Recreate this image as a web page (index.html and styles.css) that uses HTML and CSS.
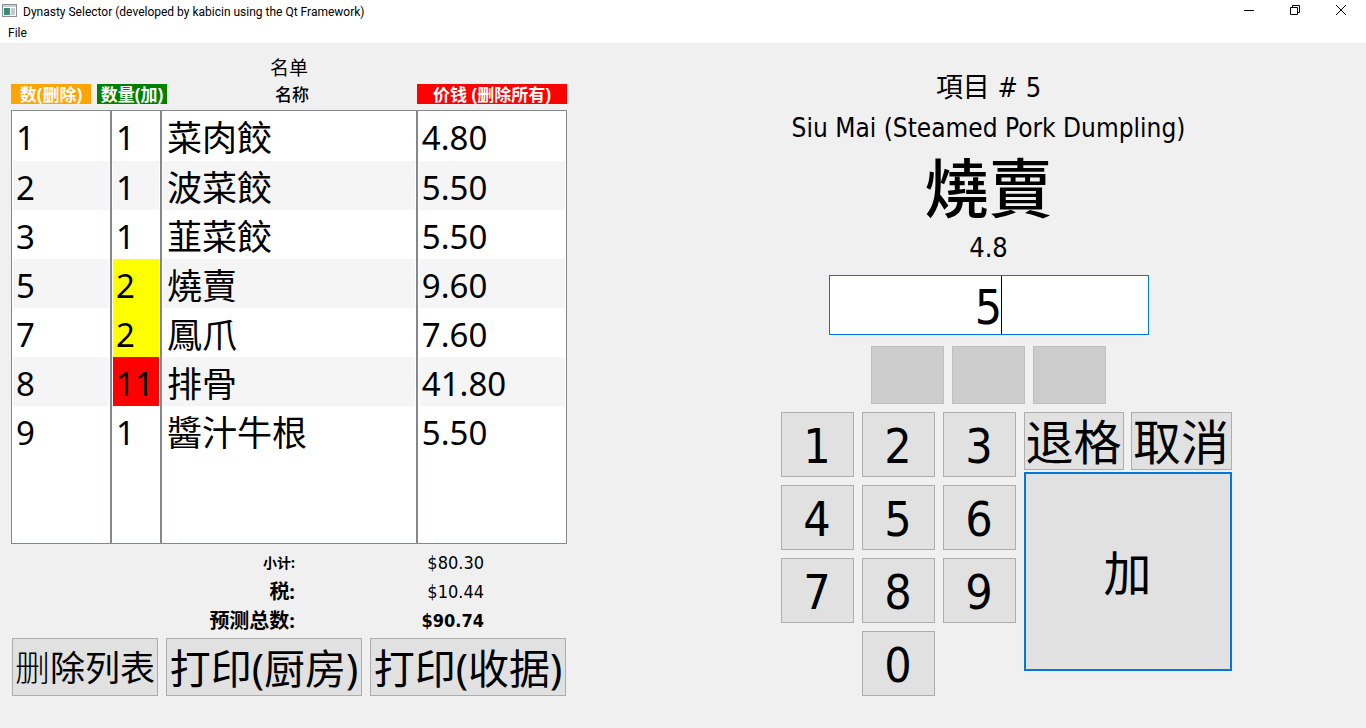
FILE: index.html
```html
<!DOCTYPE html>
<html lang="zh">
<head>
<meta charset="utf-8">
<title>Dynasty Selector</title>
<link rel="stylesheet" href="styles.css">
</head>
<body>
<header class="titlebar">
  <svg class="app-icon" width="16" height="16" viewBox="0 0 16 16" aria-hidden="true">
    <defs><linearGradient id="pane" x1="0" y1="0" x2="1" y2="1"><stop offset="0" stop-color="#2f7f8c"/><stop offset="1" stop-color="#3f9a5e"/></linearGradient></defs>
    <rect x="0.5" y="0.5" width="14" height="12" fill="#fff" stroke="#8b8f94"/>
    <rect x="1" y="1" width="13" height="2" fill="#c9ced4"/>
    <rect x="2" y="4" width="6" height="7" fill="url(#pane)"/>
    <rect x="9" y="4" width="4" height="7" fill="#c3ccd6"/>
  </svg>
  <h1 class="title">Dynasty Selector (developed by kabicin using the Qt Framework)</h1>
  <div class="window-buttons">
    <button class="window-button" aria-label="Minimize"><svg width="10" height="10" viewBox="0 0 10 10"><path d="M0 5.500H10" stroke="#000"/></svg></button>
    <button class="window-button" aria-label="Restore"><svg width="10" height="10" viewBox="0 0 10 10"><path d="M0.500 2.500H7.500V9.500H0.500ZM2.500 2V0.500H9.500V7.500H8" fill="none" stroke="#000"/></svg></button>
    <button class="window-button" aria-label="Close"><svg width="10" height="10" viewBox="0 0 10 10"><path d="M0 0L10 10M10 0L0 10" stroke="#000"/></svg></button>
  </div>
</header>
<nav class="menubar"><button class="menu">File</button></nav>

<main class="workspace">
  <section class="order">
    <h2 class="order-title">名单</h2>
    <div class="order-head">
      <button class="tag tag-orange">数(删除)</button>
      <button class="tag tag-green">数量(加)</button>
      <span class="head-name">名称</span>
      <button class="tag tag-red">价钱 (删除所有)</button>
    </div>
    <table class="items" aria-label="名单">
      <colgroup><col class="col-no"><col class="col-qty"><col class="col-name"><col class="col-price"></colgroup>
      <tbody>
        <tr><td>1</td><td>1</td><td class="name">菜肉餃</td><td>4.80</td></tr>
        <tr><td>2</td><td>1</td><td class="name">波菜餃</td><td>5.50</td></tr>
        <tr><td>3</td><td>1</td><td class="name">韮菜餃</td><td>5.50</td></tr>
        <tr><td>5</td><td class="qty-warn">2</td><td class="name">燒賣</td><td>9.60</td></tr>
        <tr><td>7</td><td class="qty-warn">2</td><td class="name">鳳爪</td><td>7.60</td></tr>
        <tr><td>8</td><td class="qty-high">11</td><td class="name">排骨</td><td>41.80</td></tr>
        <tr><td>9</td><td>1</td><td class="name">醬汁牛根</td><td>5.50</td></tr>
        <tr class="filler"><td></td><td></td><td></td><td></td></tr>
      </tbody>
    </table>
    <dl class="totals">
      <dt class="subtotal">小计:</dt><dd>$80.30</dd>
      <dt>税:</dt><dd>$10.44</dd>
      <dt>预测总数:</dt><dd class="grand">$90.74</dd>
    </dl>
    <div class="actions">
      <button class="button action-clear"><span class="thin">删</span>除列表</button>
      <button class="button action">打印(厨房)</button>
      <button class="button action">打印(收据)</button>
    </div>
  </section>

  <section class="entry">
    <label class="item-no" for="code">項目 # 5</label>
    <p class="item-english">Siu Mai (Steamed Pork Dumpling)</p>
    <p class="item-chinese">燒賣</p>
    <p class="item-price">4.8</p>
    <div class="code-box"><input class="code" id="code" type="text" value="5"><span class="caret"></span></div>
    <div class="options">
      <button class="button option" disabled></button>
      <button class="button option" disabled></button>
      <button class="button option" disabled></button>
    </div>
    <div class="keypad">
      <div class="digits">
        <button class="button">1</button><button class="button">2</button><button class="button">3</button>
        <button class="button">4</button><button class="button">5</button><button class="button">6</button>
        <button class="button">7</button><button class="button">8</button><button class="button">9</button>
        <button class="button zero">0</button>
      </div>
      <div class="commands">
        <button class="button">退格</button><button class="button">取消</button>
        <button class="button add">加</button>
      </div>
    </div>
  </section>
</main>
</body>
</html>
```
FILE: styles.css
```css
* { box-sizing: border-box; }
body {
  margin: 0;
  min-height: 100vh;
  background: #f0f0f0;
  color: #000;
  font-family: "Noto Sans", "Noto Sans CJK SC", sans-serif;
}
h1, h2, p, dl, dd { margin: 0; font-weight: 400; }
button, input { font: inherit; color: inherit; }
button { padding: 0; border: 0; background: none; white-space: nowrap; }

.titlebar { display: flex; align-items: center; height: 24px; padding-left: 2px; background: #fff; }
.title { flex: 1; margin-left: 5px; font-family: Roboto, sans-serif; font-size: 12px; line-height: 24px; }
.window-buttons { display: flex; }
.window-button { display: flex; align-items: center; justify-content: center; width: 46px; height: 24px; padding-bottom: 4px; }
.window-button:last-child { margin-right: 2px; }
.menubar { display: flex; height: 19px; padding-left: 8px; background: #fff; }
.menu { font-family: Roboto, sans-serif; font-size: 12px; line-height: 19px; }

.workspace {
  display: grid;
  grid-template-columns: minmax(0, 556fr) minmax(0, 755fr);
  column-gap: 44px;
  padding-left: 11px;
}

.order { padding-top: 13px; }
.order-title { height: 28px; text-align: center; font-size: 19px; line-height: 24px; }
.order-head { display: grid; grid-template-columns: 80fr 70fr 238fr 150fr; column-gap: 6px; height: 20px; margin-bottom: 6px; font-size: 17px; line-height: 22px; }
.tag { height: 20px; color: #fff; font-weight: 700; }
.tag-orange { background: #ffa500; }
.tag-green { background: #008000; }
.tag-red { background: #f00; }
.head-name { text-align: center; font-weight: 500; }

.items { width: 100%; table-layout: fixed; border-spacing: 0; border: solid #828790; border-width: 1px 0; background: #fff; }
.col-no { width: 18%; }
.col-qty { width: 9%; }
.col-name { width: 46%; }
.col-price { width: 27%; }
.items td {
  height: 49px;
  padding: 4px 0 0 4px;
  border: solid #828790;
  border-width: 0 1px;
  box-shadow: inset 1px 0 #fff, inset -1px 0 #fff;
  font-size: 33px;
  line-height: 40px;
}
.items .name { padding-left: 5px; font-size: 35px; }
.items tr:first-child td { height: 50px; }
.items tr:nth-child(even) td { background-color: #f5f5f5; }
.items tr .qty-warn.qty-warn { background-color: #ff0; }
.items tr .qty-high.qty-high { background-color: #f00; }
.items tr.filler td { height: 88px; background-color: #fff; }

.totals { display: grid; grid-template-columns: 284fr 189fr 83fr; grid-auto-rows: 29px; padding: 4px 0 3px; text-align: right; line-height: 29px; }
.totals dt { grid-column: 1; font-size: 20px; font-weight: 700; }
.totals .subtotal { font-size: 14px; }
.totals dd { grid-column: 2; font-family: "DejaVu Sans Condensed", "DejaVu Sans", sans-serif; font-size: 18px; }
.totals .grand { font-weight: 700; }

.button { border: 1px solid #adadad; background: #e1e1e1; }
.actions { display: grid; grid-template-columns: 146fr 196fr 196fr; column-gap: 8px; padding: 0 1px; }
.action, .action-clear { height: 58px; padding-top: 2px; line-height: 54px; }
.action { font-size: 41px; }
.action-clear { font-size: 35px; }
.thin { font-weight: 300; }

.entry { display: flex; flex-direction: column; align-items: center; padding-top: 25px; }
.item-no, .item-english, .item-price, .code, .digits { font-family: "DejaVu Sans Condensed", "DejaVu Sans", "Noto Sans CJK SC", sans-serif; }
.item-no, .item-price { font-size: 27px; line-height: 40px; }
.item-english { font-size: 26px; line-height: 40px; }
.item-chinese { font-size: 64px; line-height: 80px; font-weight: 500; }
.code-box { position: relative; width: 320px; margin-top: 7px; }
.code { display: block; width: 100%; height: 60px; padding: 4px 0 0; border: 1px solid #0078d7; outline: 0; background: #fff; text-align: center; font-size: 48px; }
.caret { position: absolute; top: 1px; bottom: 1px; left: calc(50% + 12px); width: 1px; background: #000; }
.options { display: flex; gap: 8px; margin-top: 11px; }
.option { width: 73px; height: 58px; border-color: #bfbfbf; background: #ccc; }
.keypad { display: flex; gap: 8px; margin-top: 8px; padding-left: 35px; font-size: 48px; }
.digits { display: grid; grid-template-columns: repeat(3, 73px); grid-auto-rows: 65px; gap: 8px; }
.digits .button { padding-top: 2px; line-height: 58px; }
.zero { grid-column: 2; }
.commands { display: grid; grid-template-columns: 100px 101px; grid-template-rows: 58px 199px; gap: 2px 7px; line-height: 54px; }
.commands .button { padding-top: 2px; }
.add { grid-column: 1 / 3; border: 2px solid #0078d7; }
```
